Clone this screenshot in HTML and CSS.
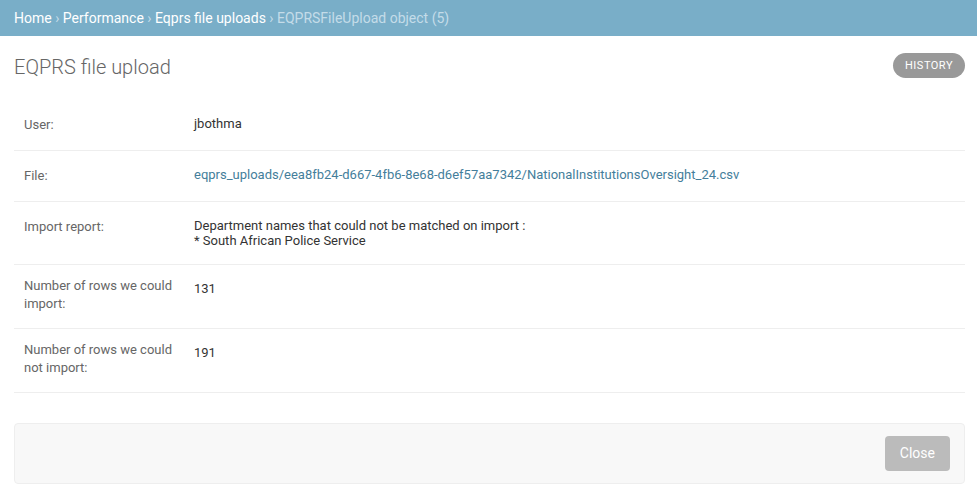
FILE: index.html
```html
<!DOCTYPE html>
<html lang="en">
<head>
<meta charset="utf-8">
<title>EQPRS file upload</title>
<link rel="stylesheet" href="styles.css">
</head>
<body>
<div class="breadcrumbs"><a href="#">Home</a> › <a href="#">Performance</a> › <a href="#">Eqprs file uploads</a> › EQPRSFileUpload object (5)</div>
<main class="content">
  <div class="page-head">
    <h1 class="title">EQPRS file upload</h1>
    <ul class="object-tools"><li><a class="historylink" href="#">History</a></li></ul>
  </div>
  <fieldset class="module">
    <div class="form-row">
      <label class="field-label">User:</label>
      <div class="readonly">jbothma</div>
    </div>
    <div class="form-row">
      <label class="field-label">File:</label>
      <div class="readonly"><a href="#">eqprs_uploads/eea8fb24-d667-4fb6-8e68-d6ef57aa7342/NationalInstitutionsOversight_24.csv</a></div>
    </div>
    <div class="form-row">
      <label class="field-label">Import report:</label>
      <div class="readonly">Department names that could not be matched on import :<br>* South African Police Service</div>
    </div>
    <div class="form-row">
      <label class="field-label wrap">Number of rows we could import:</label>
      <div class="readonly">131</div>
    </div>
    <div class="form-row">
      <label class="field-label wrap">Number of rows we could not import:</label>
      <div class="readonly">191</div>
    </div>
  </fieldset>
  <div class="submit-row"><a class="closelink" href="#">Close</a></div>
</main>
</body>
</html>
```

FILE: styles.css
```css
body {
  margin: 0;
  font-family: Roboto, "Liberation Sans", sans-serif;
  color: #333;
  background: #fff;
}

.breadcrumbs {
  background: #79aec8;
  padding: 10px 14px;
  font-size: 14px;
  color: #c4dce8;
}

.breadcrumbs a {
  color: #fff;
  text-decoration: none;
}

.content {
  padding: 17px 12px 0 14px;
}

.page-head {
  display: flex;
  justify-content: space-between;
  align-items: flex-start;
  margin-bottom: 21px;
}

.title {
  margin: 2px 0 0;
  font-size: 20px;
  font-weight: 300;
  line-height: 24px;
  color: #666;
}

.object-tools {
  list-style: none;
  margin: 0;
  padding: 0;
  display: flex;
}

.historylink {
  display: block;
  padding: 3px 12px;
  background: #999;
  color: #fff;
  font-size: 11px;
  line-height: 19px;
  text-transform: uppercase;
  letter-spacing: 0.5px;
  border-radius: 15px;
  text-decoration: none;
}

.module {
  border: 0;
  margin: 0 0 30px;
  padding: 0;
  min-width: 0;
}

.form-row {
  display: flex;
  align-items: flex-start;
  padding: 10px;
  border-bottom: 1px solid #eee;
  font-size: 13px;
}

.field-label {
  flex: none;
  width: 160px;
  padding: 6px 10px 6px 0;
  line-height: 18px;
  color: #666;
}

.field-label.wrap {
  padding: 2px 10px 5px 0;
}

.readonly {
  padding: 6px 0;
  line-height: 15px;
  color: #333;
}

.readonly a {
  color: #447e9b;
  text-decoration: none;
}

.submit-row {
  display: flex;
  justify-content: flex-end;
  padding: 12px 14px;
  background: #f8f8f8;
  border: 1px solid #eee;
  border-radius: 4px;
}

.closelink {
  display: block;
  padding: 10px 15px;
  font-size: 14px;
  line-height: 15px;
  background: #bbb;
  color: #fff;
  border-radius: 4px;
  text-decoration: none;
}
```
